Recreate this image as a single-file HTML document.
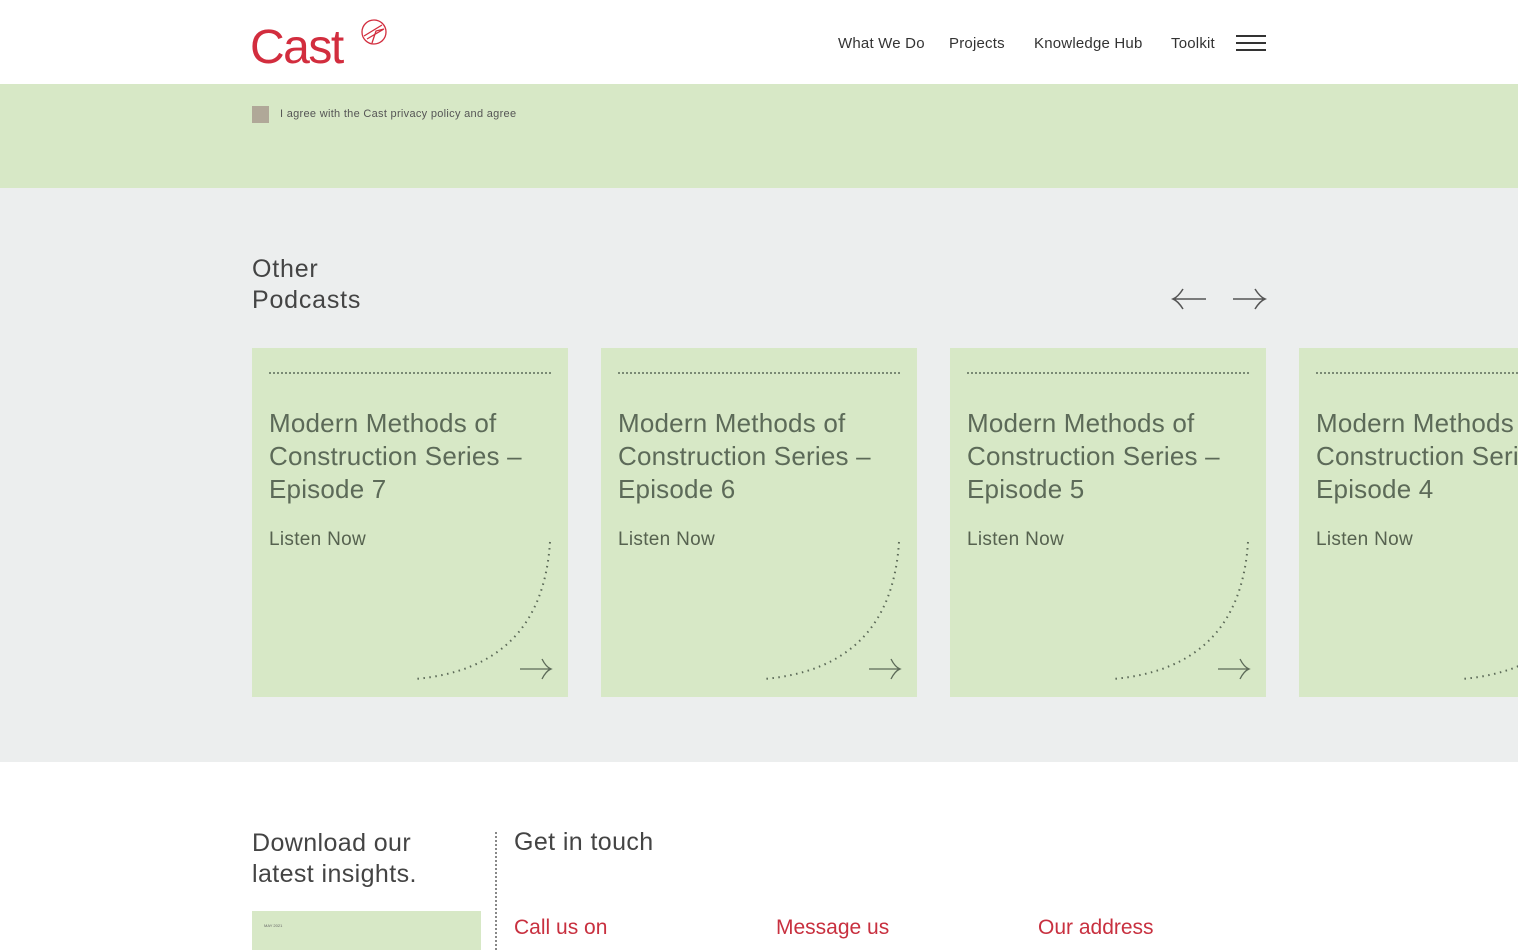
<!DOCTYPE html>
<html><head><meta charset="utf-8"><style>
*{margin:0;padding:0;box-sizing:border-box}
html{overflow:hidden}
body{width:1518px;height:950px;overflow:hidden;font-family:"Liberation Sans",sans-serif;background:#fff;position:relative;color:#444}
.abs{position:absolute}
.nav a{position:absolute;top:35px;font-size:15px;color:#333;text-decoration:none;letter-spacing:.2px}
.card{position:absolute;top:348px;width:316px;height:349px;background:#d7e8c6}
.card .dots{position:absolute;left:17px;right:17px;top:24px;border-top:2px dotted #7a8a74}
.card h3{position:absolute;left:17px;top:59px;font-weight:normal;font-size:26px;line-height:33px;color:#5c6a58;white-space:nowrap;letter-spacing:.2px}
.card .ln{position:absolute;left:17px;top:181px;font-size:19px;color:#56624f;letter-spacing:.3px}
.card svg{position:absolute;left:0;top:0}
</style></head><body>
<div class="abs" style="left:250px;top:20px;font-size:48px;line-height:56px;color:#d22d3e;letter-spacing:-1.5px">Cast</div>
<svg class="abs" style="left:358px;top:17px" width="32" height="32" viewBox="0 0 32 32" fill="none" stroke="#d22d3e" stroke-width="1.3"><circle cx="16" cy="15" r="12"/><path d="M6 19 L24 8 M9 22 L26 12 M14 26 L18 14 L26 12"/></svg>
<div class="nav"><a style="left:838px">What We Do</a><a style="left:949px">Projects</a><a style="left:1034px">Knowledge Hub</a><a style="left:1171px">Toolkit</a></div>
<div class="abs" style="left:1236px;top:35px;width:30px;height:2px;background:#333;box-shadow:0 7px 0 #333,0 14px 0 #333"></div>
<div class="abs" style="left:0;top:84px;width:1518px;height:104px;background:#d7e8c6"></div>
<div class="abs" style="left:252px;top:106px;width:17px;height:17px;background:#b0a898"></div>
<div class="abs" style="left:280px;top:108px;font-size:11px;color:#555;letter-spacing:.3px">I agree with the Cast privacy policy and agree</div>
<div class="abs" style="left:0;top:188px;width:1518px;height:574px;background:#eceeee"></div>
<div class="abs" style="left:252px;top:254px;font-size:25px;line-height:31px;color:#444;letter-spacing:.8px">Other<br>Podcasts</div>
<svg class="abs" style="left:1170px;top:286px" width="100" height="26" fill="none" stroke="#555" stroke-width="1.5"><path d="M3 13 H36 M13 3 Q8 11 3 13 Q8 15 13 23"/><path d="M63 13 H95 M85 3 Q90 11 95 13 Q90 15 85 23"/></svg>
<div class="card" style="left:252px"><div class="dots"></div><h3>Modern Methods of<br>Construction Series –<br>Episode 7</h3><div class="ln">Listen Now</div><svg width="316" height="349" fill="none"><path d="M298 194 Q290 320 163 331" stroke="#5c6a58" stroke-width="2" stroke-dasharray="1.5 4.5"/><path d="M268 321 H299 M290 311 Q294 319 299 321 Q294 323 290 331" stroke="#5c6a58" stroke-width="1.3"/></svg></div>
<div class="card" style="left:601px"><div class="dots"></div><h3>Modern Methods of<br>Construction Series –<br>Episode 6</h3><div class="ln">Listen Now</div><svg width="316" height="349" fill="none"><path d="M298 194 Q290 320 163 331" stroke="#5c6a58" stroke-width="2" stroke-dasharray="1.5 4.5"/><path d="M268 321 H299 M290 311 Q294 319 299 321 Q294 323 290 331" stroke="#5c6a58" stroke-width="1.3"/></svg></div>
<div class="card" style="left:950px"><div class="dots"></div><h3>Modern Methods of<br>Construction Series –<br>Episode 5</h3><div class="ln">Listen Now</div><svg width="316" height="349" fill="none"><path d="M298 194 Q290 320 163 331" stroke="#5c6a58" stroke-width="2" stroke-dasharray="1.5 4.5"/><path d="M268 321 H299 M290 311 Q294 319 299 321 Q294 323 290 331" stroke="#5c6a58" stroke-width="1.3"/></svg></div>
<div class="card" style="left:1299px;width:219px;overflow:hidden"><div class="dots" style="right:0"></div><h3>Modern Methods of<br>Construction Series –<br>Episode 4</h3><div class="ln">Listen Now</div><svg width="316" height="349" fill="none"><path d="M298 194 Q290 320 163 331" stroke="#5c6a58" stroke-width="2" stroke-dasharray="1.5 4.5"/></svg></div>
<div class="abs" style="left:252px;top:828px;font-size:25px;line-height:31px;color:#444;letter-spacing:.4px">Download our<br>latest insights.</div>
<div class="abs" style="left:252px;top:911px;width:229px;height:39px;background:#d7e8c6"></div>
<div class="abs" style="left:264px;top:923px;font-size:4px;color:#666">MAY 2021</div>
<div class="abs" style="left:495px;top:832px;height:118px;border-left:2px dotted #888"></div>
<div class="abs" style="left:514px;top:828px;font-size:25px;color:#444;letter-spacing:.4px">Get in touch</div>
<div class="abs" style="left:514px;top:916px;font-size:21px;color:#c8303f">Call us on</div>
<div class="abs" style="left:776px;top:916px;font-size:21px;color:#c8303f">Message us</div>
<div class="abs" style="left:1038px;top:916px;font-size:21px;color:#c8303f">Our address</div>
</body></html>
